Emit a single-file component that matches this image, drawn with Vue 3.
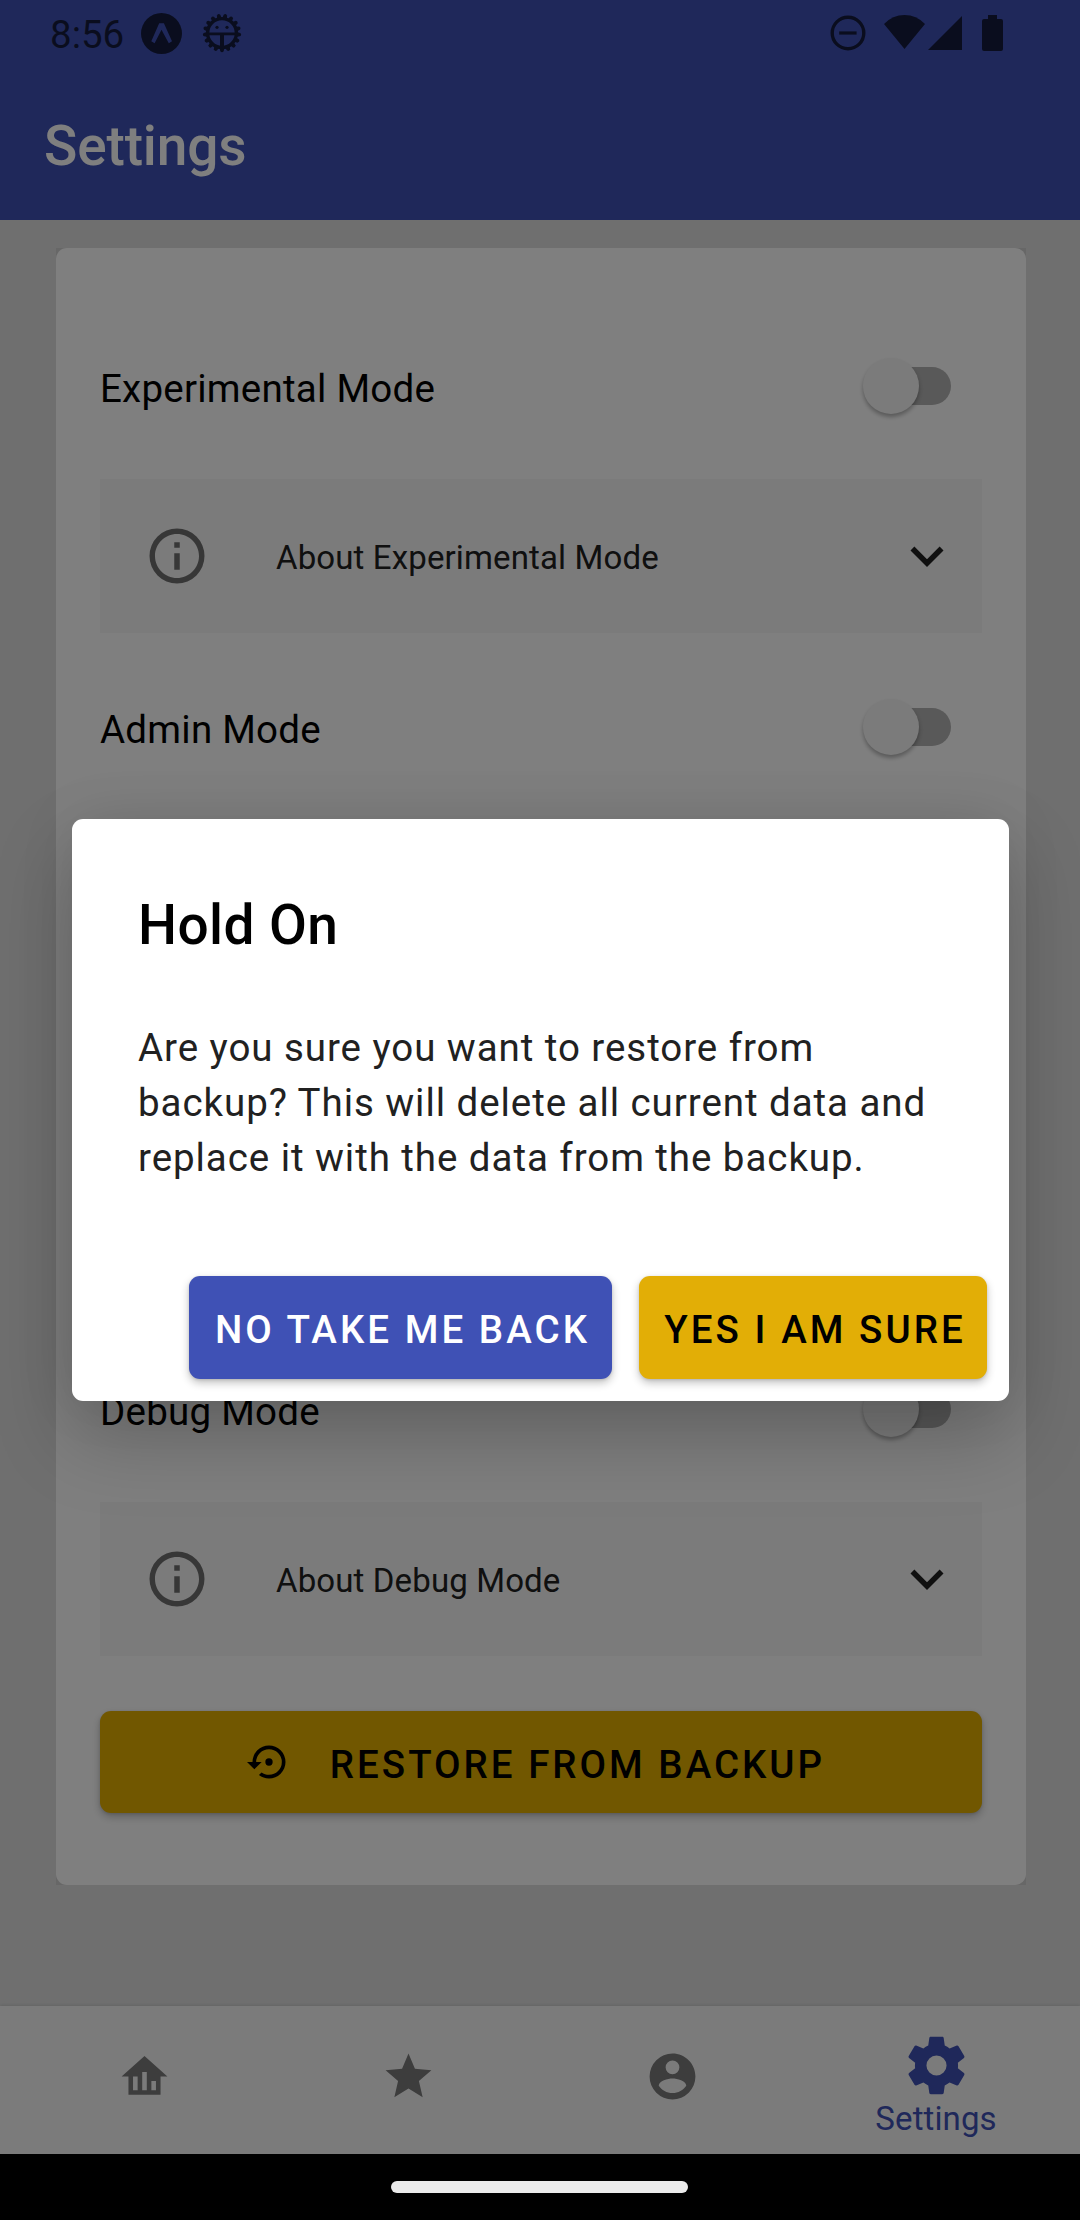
<script setup>
const sections = [
  { title: 'Experimental Mode', about: 'About Experimental Mode' },
  { title: 'Admin Mode' },
  { title: 'Debug Mode', about: 'About Debug Mode', last: true },
]

// Angles of the knobs around the debug badge, one pointing straight down
const knobs = Array.from({ length: 17 }, (_, i) => (i * 360) / 17 + 180)

const tabs = [
  { id: 'home', d: 'M12 3L2 12H5V20H19V12H22L12 3M9 18H7V12H9V18M13 18H11V10H13V18M17 18H15V14H17V18Z' },
  { id: 'star', d: 'M12,17.27L18.18,21L16.54,13.97L22,9.24L14.81,8.62L12,2L9.19,8.62L2,9.24L7.45,13.97L5.82,21L12,17.27Z' },
  { id: 'account', d: 'M12,19.2C9.5,19.2 7.29,17.92 6,16C6.03,14 10,12.9 12,12.9C14,12.9 17.97,14 18,16C16.71,17.92 14.5,19.2 12,19.2M12,5A3,3 0 0,1 15,8A3,3 0 0,1 12,11A3,3 0 0,1 9,8A3,3 0 0,1 12,5M12,2A10,10 0 0,0 2,12A10,10 0 0,0 12,22A10,10 0 0,0 22,12C22,6.47 17.5,2 12,2Z' },
  { id: 'settings', label: 'Settings', d: 'M12,15.5A3.5,3.5 0 0,1 8.5,12A3.5,3.5 0 0,1 12,8.5A3.5,3.5 0 0,1 15.5,12A3.5,3.5 0 0,1 12,15.5M19.43,12.97C19.47,12.65 19.5,12.33 19.5,12C19.5,11.67 19.47,11.34 19.43,11L21.54,9.37C21.73,9.22 21.78,8.95 21.66,8.73L19.66,5.27C19.54,5.05 19.27,4.96 19.05,5.05L16.56,6.05C16.04,5.66 15.5,5.32 14.87,5.07L14.5,2.42C14.46,2.18 14.25,2 14,2H10C9.75,2 9.54,2.18 9.5,2.42L9.13,5.07C8.5,5.32 7.96,5.66 7.44,6.05L4.95,5.05C4.73,4.96 4.46,5.05 4.34,5.27L2.34,8.73C2.21,8.95 2.27,9.22 2.46,9.37L4.57,11C4.53,11.34 4.5,11.67 4.5,12C4.5,12.33 4.53,12.65 4.57,12.97L2.46,14.63C2.27,14.78 2.21,15.05 2.34,15.27L4.34,18.73C4.46,18.95 4.73,19.03 4.95,18.95L7.44,17.94C7.96,18.34 8.5,18.68 9.13,18.93L9.5,21.58C9.54,21.82 9.75,22 10,22H14C14.25,22 14.46,21.82 14.5,21.58L14.87,18.93C15.5,18.67 16.04,18.34 16.56,17.94L19.05,18.95C19.27,19.03 19.54,18.95 19.66,18.73L21.66,15.27C21.78,15.05 21.73,14.78 21.54,14.63L19.43,12.97Z' },
]
</script>

<template>
  <div class="screen">
    <header class="header">
      <div class="status">
        <span class="clock">8:56</span>
        <svg class="expo" viewBox="0 0 41 41">
          <circle cx="20.5" cy="20.5" r="20.5" />
          <path class="cut" d="M18.2 10.3H22.9L31 28.2L27.8 30.2L20.5 16.8L13.6 30.2L10.3 28.2Z" />
        </svg>
        <svg class="bug" viewBox="0 0 40 40">
          <circle class="ring" cx="20" cy="20" r="14.4" />
          <path
            v-for="a in knobs"
            :key="a"
            d="M17.4 6L18.300 1.800Q20 -.2 21.700 1.800L22.600 6Z"
            :transform="`rotate(${a} 20 20)`"
          />
          <path d="M6 19.500H34V22.300H6Z" />
          <path d="M18 21H22V35H18Z" />
          <circle cx="15" cy="14.300" r="1.600" />
          <circle cx="25" cy="14.300" r="1.600" />
        </svg>
        <div class="status-right">
          <svg class="dnd" viewBox="0 0 36 36">
            <circle class="ring" cx="18" cy="18" r="15.8" />
            <path d="M9.2 16.4H26.6V19.6H9.2Z" />
          </svg>
          <svg class="wifi" viewBox="0 0 41 34">
            <path d="M20.5 34L0 9Q8.500 0 20.500 0Q32.500 0 41 9Z" />
          </svg>
          <svg class="signal" viewBox="0 0 34 34"><path d="M34 0V34H0Z" /></svg>
          <svg class="battery" viewBox="0 0 21 36">
            <path d="M6 0H15V4H19Q21 4 21 6V34Q21 36 19 36H2Q0 36 0 34V6Q0 4 2 4H6Z" />
          </svg>
        </div>
      </div>
      <h1 class="title">Settings</h1>
    </header>

    <main class="content">
      <div class="card-edge">
        <div class="card">
          <section
            v-for="s in sections"
            :key="s.title"
            class="section"
            :class="{ last: s.last }"
          >
            <div class="mode-row">
              <span class="mode-name">{{ s.title }}</span>
              <span class="switch"><span class="thumb"></span></span>
            </div>
            <div v-if="s.about" class="accordion">
              <svg class="info" viewBox="0 0 24 24">
                <path d="M11,9H13V7H11M12,20C7.59,20 4,16.41 4,12C4,7.59 7.59,4 12,4C16.41,4 20,7.59 20,12C20,16.41 16.41,20 12,20M12,2A10,10 0 0,0 2,12A10,10 0 0,0 12,22A10,10 0 0,0 22,12A10,10 0 0,0 12,2M11,17H13V11H11V17Z" />
              </svg>
              <span class="about">{{ s.about }}</span>
              <svg class="chevron" viewBox="0 0 24 24">
                <path d="M7.41,8.58L12,13.17L16.59,8.58L18,10L12,16L6,10L7.41,8.58Z" />
              </svg>
            </div>
          </section>
          <button class="btn amber restore">
            <svg viewBox="0 0 24 24">
              <path d="M12,3A9,9 0 0,0 3,12H0L4,16L8,12H5A7,7 0 0,1 12,5A7,7 0 0,1 19,12A7,7 0 0,1 12,19C10.5,19 9.09,18.5 7.94,17.7L6.5,19.14C8.04,20.3 9.94,21 12,21A9,9 0 0,0 21,12A9,9 0 0,0 12,3M14,12A2,2 0 0,0 12,10A2,2 0 0,0 10,12A2,2 0 0,0 12,14A2,2 0 0,0 14,12Z" />
            </svg>
            <span>RESTORE FROM BACKUP</span>
          </button>
        </div>
      </div>
    </main>

    <nav class="tabs">
      <div v-for="t in tabs" :key="t.id" class="tab" :class="{ active: t.label }">
        <svg viewBox="0 0 24 24"><path :d="t.d" /></svg>
        <span v-if="t.label">{{ t.label }}</span>
      </div>
    </nav>
    <div class="gesture"></div>

    <div class="scrim">
      <div class="dialog">
        <h2>Hold On</h2>
        <p>Are you sure you want to restore from backup? This will delete all current data and replace it with the data from the backup.</p>
        <div class="actions">
          <button class="btn blue"><span>NO TAKE ME BACK</span></button>
          <button class="btn amber"><span>YES I AM SURE</span></button>
        </div>
      </div>
      <div class="handle"></div>
    </div>
  </div>
</template>

<style>
body { margin: 0; }
</style>

<style scoped>
.screen {
  position: relative;
  display: flex;
  flex-direction: column;
  width: 1080px;
  height: 2220px;
  overflow: hidden;
  background: #dfdfdf;
  font-family: Roboto, "Noto Sans", sans-serif;
  font-size: 38.5px;
  color: #000;
}
svg { display: block; flex: none; }
h1, h2, p { margin: 0; font-weight: 500; }

.header { height: 220px; background: #3f51b5; }
.status {
  display: flex;
  align-items: flex-start;
  height: 66px;
  padding: 0 77px 0 50px;
  box-sizing: border-box;
  color: #141b3d;
}
.status svg { fill: #141b3d; }
.status .cut { fill: #3f51b5; }
.status .ring { fill: none; stroke: #141b3d; stroke-width: 3.4; }
.clock { width: 91px; line-height: 46px; padding-top: 12px; }
.expo { width: 41px; height: 41px; margin-top: 13px; }
.bug { width: 40px; height: 40px; margin: 13px 0 0 20px; }
.status-right { display: flex; margin-left: auto; }
.dnd { width: 36px; height: 36px; margin: 15px 18px 0 0; }
.wifi { width: 41px; height: 34px; margin: 15px 3px 0 0; }
.signal { width: 34px; height: 34px; margin: 16px 20px 0 0; }
.battery { width: 21px; height: 36px; margin-top: 15px; }
.title { padding: 48px 0 0 44px; font-size: 55px; line-height: 64px; letter-spacing: -0.15px; color: #fff; }

.content { height: 1786px; padding: 28px 54px 0 56px; box-sizing: border-box; }
.card-edge { background: #cfcfcf; }
.card {
  height: 1637px;
  padding: 44px 44px 0;
  box-sizing: border-box;
  border-radius: 11px;
  background: #fff;
}
.section { height: 341px; }
.section.last { margin-top: 341px; }
.mode-row {
  display: flex;
  align-items: center;
  justify-content: space-between;
  height: 187px;
  padding-right: 31px;
}
.mode-name { padding-top: 5px; letter-spacing: 0.24px; }
.switch {
  display: flex;
  align-items: center;
  width: 85px;
  height: 38px;
  border-radius: 19px;
  background: #b2b2b2;
}
.thumb {
  flex: none;
  width: 56px;
  height: 56px;
  margin-left: -3px;
  border-radius: 50%;
  background: #f7f7f7;
  box-shadow: 0 3px 4px rgba(0, 0, 0, 0.3);
}
.accordion {
  display: flex;
  align-items: center;
  height: 154px;
  padding: 0 22px 0 44px;
  box-sizing: border-box;
  background: #f7f7f7;
}
.info { width: 66px; height: 66px; fill: #6f6f6f; }
.about { flex: 1; padding: 3px 0 0 66px; font-size: 33px; letter-spacing: 0.13px; color: #212121; }
.chevron { width: 66px; height: 66px; fill: #212121; }

.btn {
  display: flex;
  align-items: center;
  justify-content: center;
  height: 103px;
  padding: 5px 0 0;
  box-sizing: border-box;
  border: 0;
  border-radius: 11px;
  font: 500 38.5px Roboto, "Noto Sans", sans-serif;
  letter-spacing: 3.05px;
  white-space: nowrap;
  box-shadow: 0 4px 8px rgba(0, 0, 0, 0.24), 0 1px 3px rgba(0, 0, 0, 0.12);
}
.amber { background: #e2ae06; color: #000; }
.blue { background: #3f51b5; color: #fff; }
.restore { width: 100%; height: 102px; margin-top: 55px; padding-right: 10px; letter-spacing: 3px; background: #e2ae00; }
.restore svg { width: 44px; height: 44px; margin: -5px 39px 0 0; }

.tabs {
  display: flex;
  height: 148px;
  padding: 0 12px;
  box-sizing: border-box;
  background: #f7f7f7;
  box-shadow: 0 -1px 3px rgba(0, 0, 0, 0.1);
}
.tab { display: flex; flex: 1; flex-direction: column; align-items: center; padding-top: 43px; }
.tab svg { width: 55px; height: 55px; fill: #7b7b7b; }
.tab.active { padding-top: 25px; color: #3f51b5; font-size: 33px; letter-spacing: 0.1px; }
.tab.active svg { width: 69px; height: 69px; fill: #3f51b5; }
.tab span { line-height: 38px; }
.gesture { height: 66px; background: #000; }

.scrim {
  position: absolute;
  inset: 0;
  display: flex;
  flex-direction: column;
  align-items: flex-start;
  background: rgba(0, 0, 0, 0.5);
}
.dialog {
  width: 937px;
  height: 582px;
  margin: 819px 0 780px 72px;
  padding: 74px 22px 22px 66px;
  box-sizing: border-box;
  border-radius: 11px;
  background: #fff;
  box-shadow: 0 36px 80px rgba(0, 0, 0, 0.22), 0 0 60px rgba(0, 0, 0, 0.08);
}
.dialog h2 { font-size: 55px; line-height: 64px; letter-spacing: 0.4px; }
.dialog p {
  width: 805px;
  margin-top: 63px;
  font-weight: 400;
  line-height: 55px;
  letter-spacing: 0.94px;
  color: #212121;
}
.actions { display: flex; justify-content: flex-end; gap: 27px; margin-top: 91px; }
.actions .btn { padding: 3px 0 0 4px; }
.actions .blue { width: 423px; }
.actions .amber { width: 348px; }
.handle { width: 297px; height: 12px; margin-left: 391px; border-radius: 6px; background: #ebebeb; }
</style>
